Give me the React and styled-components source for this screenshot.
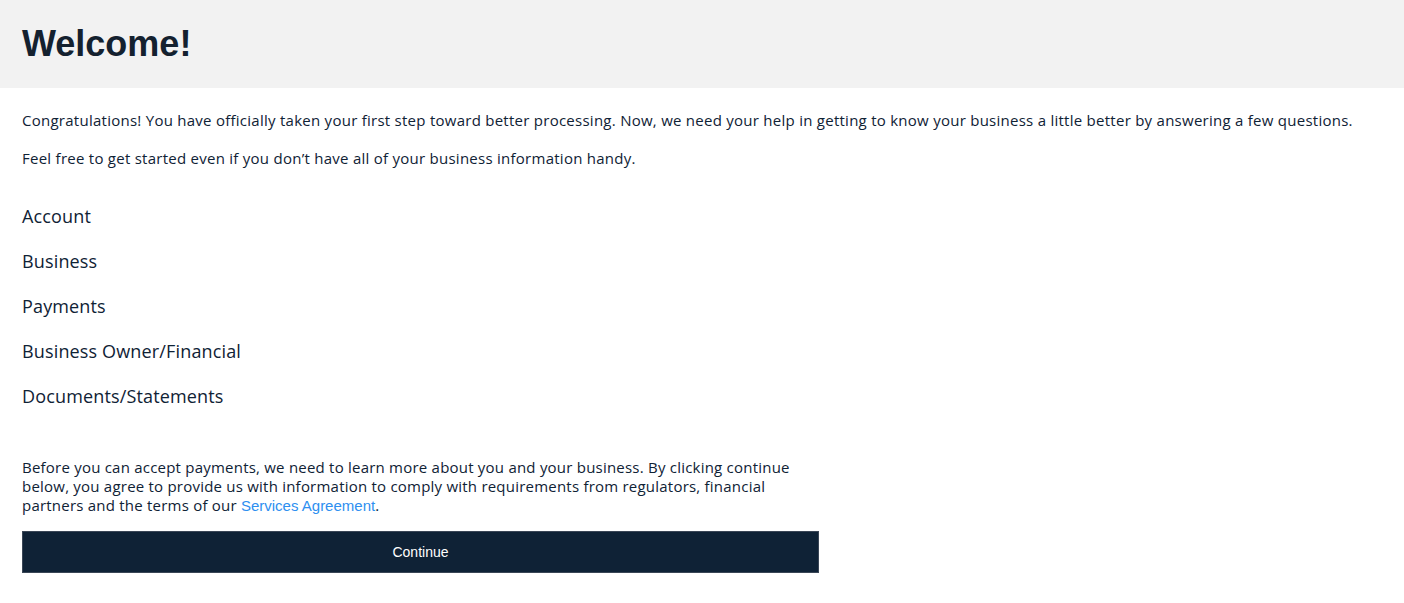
import React from "react";
import styled, { createGlobalStyle } from "styled-components";

const Global = createGlobalStyle`
  html, body {
    margin: 0;
    padding: 0;
    background: #ffffff;
  }
  * { box-sizing: border-box; }
`;

const Page = styled.div`
  font-family: "Open Sans", "Noto Sans", sans-serif;
  color: #0f2235;
`;

const Header = styled.header`
  height: 88px;
  background: #f2f2f2;
  display: flex;
  align-items: center;
  padding: 0 22px;
`;

const Title = styled.h1`
  margin: 0;
  font-family: "Liberation Sans", Arial, sans-serif;
  font-weight: 700;
  font-size: 36px;
  color: #14212f;
`;

const Body = styled.main`
  padding: 22px 22px 0;
`;

const Intro = styled.p`
  margin: 0 0 18px;
  font-size: 15px;
  line-height: 20px;
  letter-spacing: 0.26px;
`;

const Steps = styled.ul`
  list-style: none;
  margin: 36px 0 0;
  padding: 0;
  display: flex;
  flex-direction: column;
  gap: 20px;
`;

const Step = styled.li`
  font-size: 18px;
  line-height: 25px;
  letter-spacing: 0.15px;
`;

const Footer = styled.div`
  width: 797px;
  margin-top: 49px;
`;

const Notice = styled.p`
  margin: 0 0 16px;
  font-size: 15px;
  line-height: 19px;
  letter-spacing: 0.22px;
`;

const Link = styled.a`
  color: #2e8ff0;
  text-decoration: none;
  font-family: "Liberation Sans", Arial, sans-serif;
  letter-spacing: 0;
  line-height: 19px;
`;

const ContinueButton = styled.button`
  display: block;
  width: 100%;
  height: 42px;
  background: #0f2236;
  border: 1px solid #3a4656;
  color: #ffffff;
  font-family: "Liberation Sans", Arial, sans-serif;
  font-size: 14px;
  cursor: pointer;
`;

const steps = [
  "Account",
  "Business",
  "Payments",
  "Business Owner/Financial",
  "Documents/Statements",
];

export default function App() {
  return (
    <Page>
      <Global />
      <Header>
        <Title>Welcome!</Title>
      </Header>
      <Body>
        <Intro>
          Congratulations! You have officially taken your first step toward better processing. Now, we need your help in getting to know your business a little better by answering a few questions.
        </Intro>
        <Intro>
          Feel free to get started even if you don’t have all of your business information handy.
        </Intro>
        <Steps>
          {steps.map((s) => (
            <Step key={s}>{s}</Step>
          ))}
        </Steps>
        <Footer>
          <Notice>
            Before you can accept payments, we need to learn more about you and your business. By clicking continue below, you agree to provide us with information to comply with requirements from regulators, financial partners and the terms of our <Link href="#">Services Agreement</Link>.
          </Notice>
          <ContinueButton>Continue</ContinueButton>
        </Footer>
      </Body>
    </Page>
  );
}
